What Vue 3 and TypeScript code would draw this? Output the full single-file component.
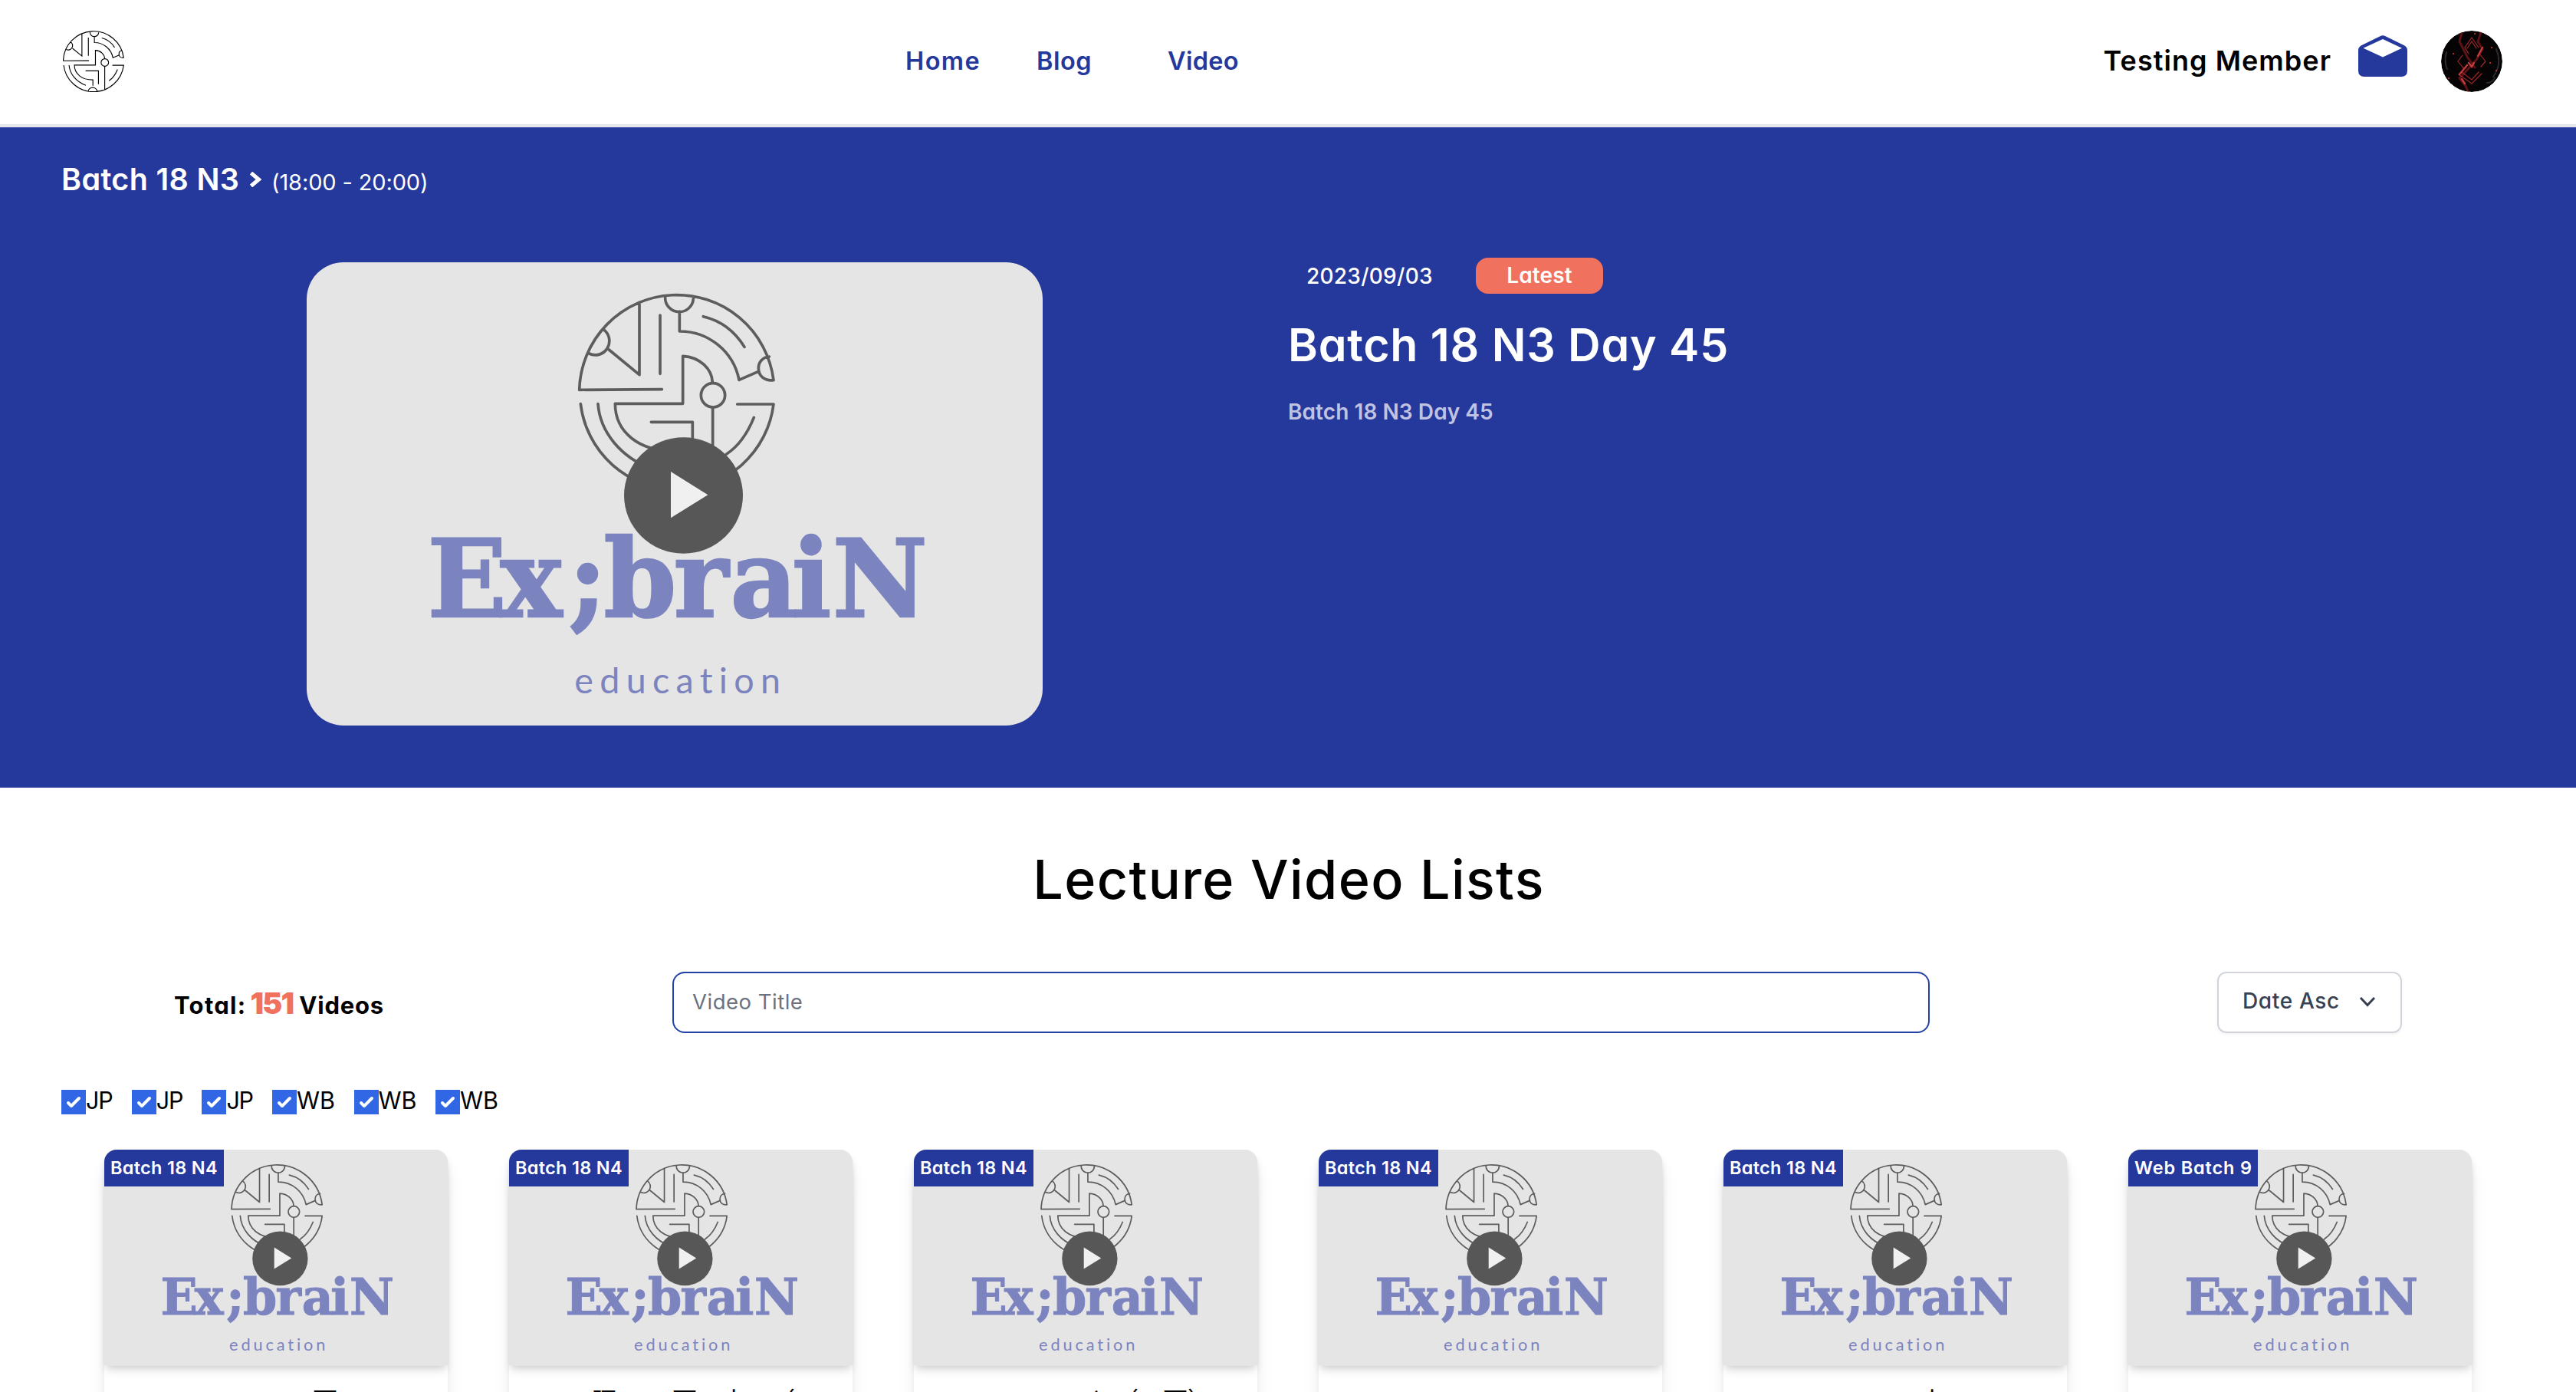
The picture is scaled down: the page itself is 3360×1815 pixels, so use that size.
<script setup lang="ts">
interface Video { badge: string; badgeClass: string; title: string; titleClass: string }

const filters: string[] = ['JP', 'JP', 'JP', 'WB', 'WB', 'WB']
const videos: Video[] = [
  { badge: 'Batch 18 N4', badgeClass: 'batch', title: 'い下', titleClass: 't1' },
  { badge: 'Batch 18 N4', badgeClass: 'batch', title: '旺いの 下い小い（', titleClass: 't2' },
  { badge: 'Batch 18 N4', badgeClass: 'batch', title: 'いいと（一可）', titleClass: 't3' },
  { badge: 'Batch 18 N4', badgeClass: 'batch', title: 'い', titleClass: 't4' },
  { badge: 'Batch 18 N4', badgeClass: 'batch', title: 'いいの小', titleClass: 't5' },
  { badge: 'Web Batch 9', badgeClass: 'web', title: '', titleClass: 't6' },
]

const brainPath =
  'M927 437 A381.6 381.6 0 0 0 167 475 L490 473 M402 132 V416 L283 318 M260 238 A55 55 0 0 1 205 333 M483 183 V412 ' +
  'M503 112 A55 55 0 0 0 613 118 M559 168 V246 A236 236 0 0 1 792 436 L866 404 M927 437 C895 441 868 424 868 390 C868 366 885 347 910 345 ' +
  'M652 188 C720 204 775 245 813 307 M688 445 C686 395 640 346 572 343 V529 H307 C307 640 400 715 540 715 V788 ' +
  'M785 531 H927 A380.3 380.3 0 0 1 172 530 M240 530 C248 640 330 740 451 784 M850 583 C825 645 790 695 743 726 ' +
  'M448 601 H610 V768 M689 545 V838 M481 860 A57 57 0 0 1 594 862'
</script>

<template>
  <div class="page">
    <header class="topbar">
      <svg class="logo" viewBox="162 96 772 772"><path :d="brainPath" /><circle cx="690" cy="496" r="47" /></svg>
      <nav class="nav">
        <a class="home">Home</a><a class="blog">Blog</a><a class="video">Video</a>
      </nav>
      <span class="member">Testing Member</span>
      <svg class="mail" viewBox="0 0 64 54">
        <path fill-rule="evenodd" d="M28.5 1.2Q32 -.8 35.5 1.2L60 13.2Q64 15.4 64 19.5V46Q64 54 56 54H8Q0 54 0 46V19.5Q0 15.4 4 13.2ZM32 5L6.5 16.8L32 28.5L57 16.8Z" />
      </svg>
      <svg class="avatar" viewBox="0 0 80 80">
        <circle cx="40" cy="40" r="40" fill="#050304" />
        <g fill="none" stroke-linecap="round">
          <path d="M27 3L24 14L34 34L44 48M52 2L48 14L54 24L46 38L24 62L32 72L35 79" stroke="#5d1216" stroke-width="3" />
          <path d="M40 9L31 22L36 30M40 9L49 22M40 14L34 23M40 14L46 23M22 40L28 32M22 40L30 50M58 40L50 30M58 40L52 47M23 57L40 69L53 56M27 54L40 64L49 54" stroke="#a02829" stroke-width="1.2" />
          <path d="M24 57L34 45M48 33L54 22M27 63L31 69M36 42L40 47L43 42" stroke="#c23d3b" stroke-width="2.4" />
          <path d="M7 28C5 36 5 44 8 50M72 24C77 36 77 48 68 60M60 68C64 68 68 66 70 61" stroke="#2b2c30" stroke-width="2" />
          <path d="M16 30h.1M72 52h.1M10 62h.1M64 42h.1M44 4h.1M66 22h.1" stroke="#d43636" stroke-width="2" />
        </g>
      </svg>
    </header>

    <section class="hero">
      <div class="crumb">
        <span class="crumb-name">Batch 18 N3</span>
        <svg class="crumb-arrow" viewBox="0 0 16 20"><path d="M2.5 1.5L12.5 10L2.5 18.5" /></svg>
        <span class="crumb-time">(18:00 - 20:00)</span>
      </div>
      <div class="feature">
        <svg class="feature-thumb" viewBox="-900 -24 2880 1812">
          <rect x="-900" y="-24" width="2880" height="1812" fill="#e5e5e5" />
          <g class="brain"><path :d="brainPath" /><circle cx="690" cy="496" r="47" /></g>
          <text class="brand" transform="scale(.97 1)" y="1361" x="-441 -148 128 271 553 781 1029 1193">Ex;braiN</text>
          <text class="edu" x="148" y="1663" textLength="806">education</text>
          <ellipse cx="574.5" cy="888" rx="232.5" ry="227" fill="#575757" />
          <path d="M525 795V976L670 886Z" fill="#f0f0f0" />
        </svg>
        <div class="feature-info">
          <div class="meta"><span class="date">2023/09/03</span><span class="latest">Latest</span></div>
          <h1>Batch 18 N3 Day 45</h1>
          <p>Batch 18 N3 Day 45</p>
        </div>
      </div>
    </section>

    <main>
      <h2>Lecture Video Lists</h2>
      <div class="toolbar">
        <div class="total"><span class="total-label">Total:</span><b>151</b><span class="total-unit">Videos</span></div>
        <div class="search">Video Title</div>
        <div class="sort"><span>Date Asc</span><svg viewBox="0 0 22 14"><path d="M2 2L11 11.5L20 2" /></svg></div>
      </div>
      <div class="filters">
        <label v-for="(f, i) in filters" :key="i">
          <svg viewBox="0 0 16 16"><path d="M12.207 4.793a1 1 0 010 1.414l-5 5a1 1 0 01-1.414 0l-2-2a1 1 0 011.414-1.414L6.5 9.086l4.293-4.293a1 1 0 011.414 0z" /></svg>
          <span :class="f.toLowerCase()">{{ f }}</span>
        </label>
      </div>
      <div class="cards">
        <article v-for="(v, i) in videos" :key="i" class="card">
          <div class="thumb">
            <svg viewBox="-900 -24 2880 1812">
              <g class="brain"><path :d="brainPath" /><circle cx="690" cy="496" r="47" /></g>
              <text class="brand" transform="scale(.97 1)" y="1361" x="-441 -148 128 271 553 781 1029 1193">Ex;braiN</text>
              <text class="edu" x="148" y="1663" textLength="806">education</text>
              <ellipse cx="574.5" cy="888" rx="232.5" ry="227" fill="#575757" />
              <path d="M525 795V976L670 886Z" fill="#f0f0f0" />
            </svg>
            <span class="tag" :class="v.badgeClass">{{ v.badge }}</span>
          </div>
          <div class="title" :class="v.titleClass">{{ v.title }}</div>
        </article>
      </div>
    </main>
  </div>
</template>

<style>
html, body { margin: 0; overflow: hidden; background: #fff; }
</style>

<style scoped>
* { box-sizing: border-box; }
.page { width: 3360px; height: 1815px; overflow: hidden; background: #fff; color: #000; font-family: Inter, "Noto Sans CJK JP", sans-serif; font-feature-settings: "cv11"; white-space: nowrap; }
.topbar { height: 166px; border-bottom: 4px solid #e5e7eb; display: flex; align-items: flex-start; padding: 40px 96px 0 82px; }
.logo { width: 80px; height: 80px; flex: none; fill: none; stroke: #000; stroke-width: 11; }
.nav { display: flex; margin-left: 1019px; color: #25389b; font-size: 32.5px; font-weight: 600; line-height: 80px; }
.home { width: 171px; letter-spacing: 1.4px; }
.blog { width: 171px; letter-spacing: .5px; }
.video { width: 120px; letter-spacing: .3px; }
.member { margin-left: auto; font-size: 36px; font-weight: 600; line-height: 79px; letter-spacing: 1.05px; }
.mail { width: 64px; height: 54px; margin: 6px 44px 0 35px; fill: #25389b; flex: none; }
.avatar { width: 80px; height: 80px; flex: none; border-radius: 50%; }
.hero { height: 861px; background: #25389b; color: #fff; }
.crumb { height: 136px; padding-left: 80px; display: flex; align-items: center; }
.crumb-name { width: 244px; font-size: 39.5px; font-weight: 600; letter-spacing: .35px; }
.crumb-arrow { width: 18px; height: 20px; margin-right: 12px; fill: none; stroke: #fff; stroke-width: 5; }
.crumb-time { font-size: 29px; padding-top: 7px; letter-spacing: -.13px; }
.feature { display: flex; padding: 40px 0 0 400px; }
.feature-thumb { width: 960px; height: 604px; border-radius: 48px; flex: none; }
.brain { fill: none; stroke: #5d5d5d; stroke-width: 11; stroke-linecap: round; stroke-linejoin: round; }
.brand { font: bold 420px "DejaVu Serif", serif; fill: #7c84bf; stroke: #7c84bf; stroke-width: 7; }
.edu { font: 140px Lato, sans-serif; font-variant-ligatures: none; fill: #7c84bf; }
.feature-info { margin-left: 320px; }
.meta { display: flex; align-items: center; height: 47px; margin-top: -6px; font-size: 28px; }
.date { width: 221px; padding-left: 24px; font-weight: 500; letter-spacing: .26px; }
.latest { width: 166px; height: 47px; margin-left: 24px; border-radius: 16px; background: #f0715e; text-align: center; line-height: 47px; font-weight: 600; letter-spacing: .13px; }
h1 { margin: 22px 0 0; font-size: 59px; line-height: 90px; font-weight: 600; letter-spacing: .75px; }
p { margin: 21px 0 0; font-size: 28px; line-height: 42px; font-weight: 600; letter-spacing: .07px; color: #c0c3e2; }
h2 { margin: 66px 0 0; padding-left: 2px; height: 108px; line-height: 108px; text-align: center; font-size: 70px; font-weight: 500; letter-spacing: 1.4px; }
.toolbar { display: flex; height: 80px; margin-top: 66px; }
.total { width: 877px; padding-left: 227px; font-size: 31px; font-weight: 700; line-height: 81px; }
.total-label { letter-spacing: 1.3px; }
.total-unit { letter-spacing: .8px; }
.total b { font-size: 39px; color: #f0715e; margin: 0 8px 0 5px; letter-spacing: -1.8px; }
.search { width: 1640px; border: 2px solid #2342a8; border-radius: 16px; padding-left: 24px; font-size: 27.5px; line-height: 75px; color: #6b7280; letter-spacing: .5px; }
.sort { width: 241px; margin-left: 375px; border: 2px solid #d1d5db; border-radius: 12px; padding-left: 31px; font-size: 28px; font-weight: 500; line-height: 72px; color: #374151; box-shadow: 0 2px 4px rgba(0,0,0,.05); display: flex; }
.sort span { width: 124px; letter-spacing: .65px; }
.sort svg { width: 22px; height: 14px; margin: 30px 0 0 28px; fill: none; stroke: #374151; stroke-width: 3; }
.filters { display: flex; margin: 74px 0 0 80px; height: 32px; }
.filters label { display: flex; height: 32px; line-height: 28px; font-size: 30.5px; }
.filters svg { width: 32px; height: 32px; background: #3166e4; fill: #fff; flex: none; }
.jp { width: 59.7px; letter-spacing: -1.2px; } .wb { width: 74.5px; letter-spacing: -.2px; }
.cards { display: flex; gap: 80px; margin: 46px 0 0 136px; }
.card { width: 448px; height: 420px; flex: none; border-radius: 16px; background: #fff; box-shadow: 0 20px 30px -6px rgba(0,0,0,.1), 0 8px 12px -4px rgba(0,0,0,.1); }
.thumb { position: relative; height: 282px; border-radius: 16px 16px 2px 2px; background: #e5e5e5; box-shadow: 0 8px 12px -2px rgba(0,0,0,.12), 0 4px 8px -4px rgba(0,0,0,.12); }
.thumb svg { display: block; width: 448px; height: 282px; }
.tag { position: absolute; left: 0; top: 0; height: 48px; line-height: 48px; padding-left: 8px; border-top-left-radius: 16px; background: #25389b; color: #fff; font-size: 23.5px; font-weight: 600; }
.batch { width: 156px; letter-spacing: .3px; } .web { width: 169px; letter-spacing: .85px; }
.title { margin-top: 22px; font-size: 32px; line-height: 48px; }
.t1 { padding-left: 240px; } .t2 { padding-left: 108px; } .t3 { padding-left: 165px; } .t4 { padding-left: 200px; } .t5 { padding-left: 160px; }
</style>
